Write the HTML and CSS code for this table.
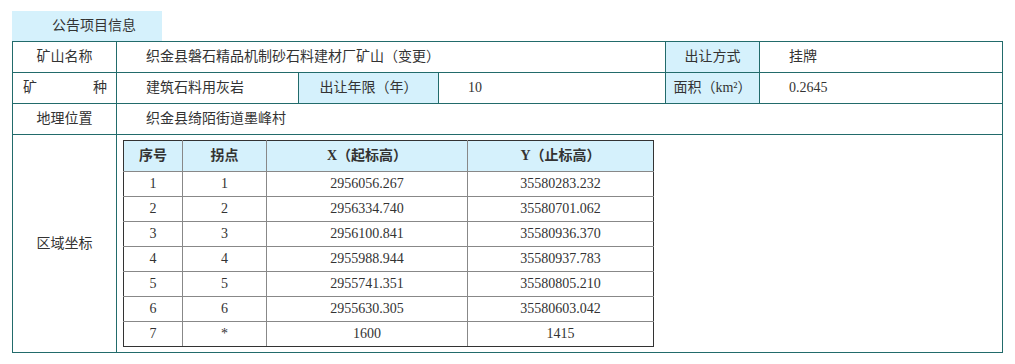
FILE: index.html
```html
<!DOCTYPE html>
<html lang="zh-CN">
<head>
<meta charset="utf-8">
<title>公告项目信息</title>
<link rel="stylesheet" href="styles.css">
</head>
<body>
<div class="page">
  <div class="tab">公告项目信息</div>
  <table class="info">
    <colgroup>
      <col class="c1"><col class="c2"><col class="c3"><col class="c4"><col class="c5"><col class="c6">
    </colgroup>
    <tr class="row">
      <td class="label">矿山名称</td>
      <td class="val" colspan="3">织金县磐石精品机制砂石料建材厂矿山（变更）</td>
      <td class="label hl">出让方式</td>
      <td class="val">挂牌</td>
    </tr>
    <tr class="row">
      <td class="label spread">矿种</td>
      <td class="val">建筑石料用灰岩</td>
      <td class="label hl">出让年限（年）</td>
      <td class="val">10</td>
      <td class="label hl">面积（km²）</td>
      <td class="val">0.2645</td>
    </tr>
    <tr class="row">
      <td class="label">地理位置</td>
      <td class="val" colspan="5">织金县绮陌街道墨峰村</td>
    </tr>
    <tr>
      <td class="label">区域坐标</td>
      <td class="coords" colspan="5">
        <table class="pts">
          <colgroup>
            <col class="p1"><col class="p2"><col class="p3"><col class="p4">
          </colgroup>
          <tr class="head"><th>序号</th><th>拐点</th><th>X（起标高）</th><th>Y（止标高）</th></tr>
          <tr><td>1</td><td>1</td><td>2956056.267</td><td>35580283.232</td></tr>
          <tr><td>2</td><td>2</td><td>2956334.740</td><td>35580701.062</td></tr>
          <tr><td>3</td><td>3</td><td>2956100.841</td><td>35580936.370</td></tr>
          <tr><td>4</td><td>4</td><td>2955988.944</td><td>35580937.783</td></tr>
          <tr><td>5</td><td>5</td><td>2955741.351</td><td>35580805.210</td></tr>
          <tr><td>6</td><td>6</td><td>2955630.305</td><td>35580603.042</td></tr>
          <tr><td>7</td><td>*</td><td>1600</td><td>1415</td></tr>
        </table>
      </td>
    </tr>
  </table>
</div>
</body>
</html>
```

FILE: styles.css
```css
html, body {
  margin: 0;
  padding: 0;
  background: #ffffff;
}
body {
  font-family: "Liberation Serif", "Noto Sans CJK SC", serif;
  font-size: 14px;
  line-height: 20px;
  color: #333333;
}
.page {
  padding: 11px 0 0 12px;
}
.tab {
  width: 110px;
  height: 30px;
  line-height: 30px;
  padding-left: 40px;
  background: #d5f1fc;
}
.info {
  border-collapse: collapse;
  table-layout: fixed;
  width: 990px;
}
.info > tbody > tr > td {
  border: 1px solid #226b6b;
  padding: 0;
}
.c1 { width: 104px; }
.c2 { width: 182px; }
.c3 { width: 140px; }
.c4 { width: 227px; }
.c5 { width: 94px; }
.c6 { width: 243px; }
.row { height: 31px; }
.label {
  text-align: center;
}
.hl {
  background: #d5f1fc;
}
.info > tbody > tr > td.spread {
  text-align: justify;
  text-align-last: justify;
  padding: 0 9px 0 10px;
}
.info > tbody > tr > td.val {
  padding-left: 29px;
}
.info > tbody > tr > td.coords {
  padding: 5px 0 5px 6px;
  vertical-align: middle;
}
.pts {
  border-collapse: collapse;
  table-layout: fixed;
  width: 530px;
  border: 1px solid #333333;
}
.p1 { width: 59px; }
.p2 { width: 84px; }
.p3 { width: 201px; }
.p4 { width: 186px; }
.pts th, .pts td {
  border: 1px solid #888888;
  text-align: center;
  padding: 0;
  height: 24px;
}
.pts tr:first-child th { border-top-color: #333333; }
.pts th:first-child, .pts td:first-child { border-left-color: #333333; }
.pts th:last-child, .pts td:last-child { border-right-color: #333333; }
.pts tr:last-child td { border-bottom-color: #333333; }
.pts .head th {
  height: 30px;
  background: #d5f1fc;
  font-weight: bold;
  color: #333333;
}
```
